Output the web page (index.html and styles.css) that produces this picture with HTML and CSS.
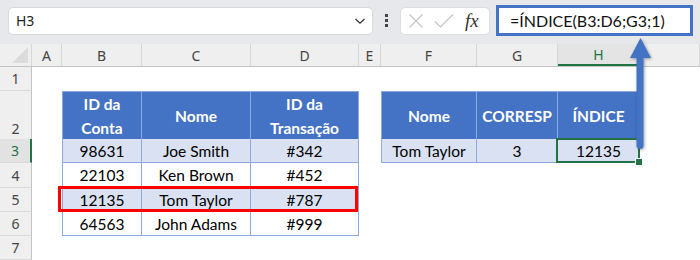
FILE: index.html
```html
<!DOCTYPE html>
<html lang="pt">
<head>
    <meta charset="UTF-8">
    <meta name="viewport" content="width=device-width, initial-scale=1.0">
    <title>ÍNDICE</title>
    <link rel="stylesheet" href="styles.css">
</head>
<body>
    <div class="toolbar">
        <div class="name-box">
            <span>H3</span>
            <svg class="chevron" width="12" height="8" viewBox="0 0 12 8"><path d="M1.5 2 L6 6.2 L10.5 2" fill="none" stroke="#333" stroke-width="1.3"/></svg>
        </div>
        <div class="grip"><i></i><i></i><i></i></div>
        <div class="fx-box">
            <svg width="16" height="16" viewBox="0 0 16 16"><path d="M1.5 1.5 L14.5 14.5 M14.5 1.5 L1.5 14.5" stroke="#c4c4c4" stroke-width="1.2"/></svg>
            <svg width="20" height="16" viewBox="0 0 20 16"><path d="M1 8.5 L6.5 14 L19 1.5" fill="none" stroke="#c4c4c4" stroke-width="1.2"/></svg>
            <span class="fx">fx</span>
        </div>
        <div class="formula">=ÍNDICE(B3:D6;G3;1)</div>
    </div>

    <div class="sheet">
        <div class="row heads">
            <div class="corner"></div>
            <div>A</div><div>B</div><div>C</div><div>D</div><div>E</div><div>F</div><div>G</div><div class="on">H</div><div></div>
        </div>

        <div class="row r1"><div class="rh">1</div></div>

        <div class="row r2">
            <div class="rh">2</div><div></div>
            <div class="th first">ID da<br>Conta</div>
            <div class="th">Nome</div>
            <div class="th">ID da<br>Transação</div>
            <div></div>
            <div class="th first">Nome</div>
            <div class="th">CORRESP</div>
            <div class="th">ÍNDICE</div>
        </div>

        <div class="row">
            <div class="rh on">3</div><div></div>
            <div class="td first band">98631</div>
            <div class="td band">Joe Smith</div>
            <div class="td band">#342</div>
            <div></div>
            <div class="td first band">Tom Taylor</div>
            <div class="td band">3</div>
            <div class="td band selected">12135</div>
        </div>

        <div class="row r4">
            <div class="rh">4</div><div></div>
            <div class="td first">22103</div>
            <div class="td">Ken Brown</div>
            <div class="td">#452</div>
        </div>

        <div class="row">
            <div class="rh">5</div><div></div>
            <!-- the matched row, boxed in red -->
            <div class="match">
                <div class="td first band">12135</div>
                <div class="td band">Tom Taylor</div>
                <div class="td band">#787</div>
            </div>
        </div>

        <div class="row">
            <div class="rh">6</div><div></div>
            <div class="td first">64563</div>
            <div class="td">John Adams</div>
            <div class="td">#999</div>
        </div>

        <div class="row"><div class="rh">7</div></div>

        <!-- arrow pointing from the result cell up to the formula -->
        <svg class="arrow" width="30" height="120" viewBox="0 0 30 120">
            <rect x="9.5" y="19" width="7" height="93" rx="3.5" fill="#4472c4"/>
            <polygon points="13.5,1 3,21 24,21" fill="#4472c4"/>
        </svg>
    </div>
</body>
</html>
```

FILE: styles.css
```css
* {
    margin: 0;
    padding: 0;
    box-sizing: border-box;
}
body {
    width: 700px;
    height: 260px;
    overflow: hidden;
    background: #fff;
    font-family: "Noto Sans", sans-serif;
}

/* formula bar */
.toolbar {
    height: 44px;
    background: #e7e8eb;
    display: flex;
    align-items: center;
    padding: 0 7px 3px 8px;
}
.name-box {
    width: 365px;
    height: 28px;
    background: #fff;
    border: 1px solid #d9d9d9;
    border-radius: 5px;
    display: flex;
    align-items: center;
    justify-content: space-between;
    padding: 0 6px 0 7px;
    font-size: 14px;
    color: #222;
}
.grip {
    width: 27px;
    display: flex;
    flex-direction: column;
    align-items: center;
    gap: 2px;
}
.grip i {
    width: 3px;
    height: 3px;
    background: #444;
}
.fx-box {
    width: 90px;
    height: 28px;
    background: #fff;
    border: 1px solid #dedede;
    border-radius: 5px;
    display: flex;
    align-items: center;
    gap: 10px;
    padding-left: 7px;
}
.fx {
    font-family: "Liberation Serif", serif;
    font-style: italic;
    font-size: 19px;
    color: #333;
    margin-left: 1px;
}
.formula {
    flex: 1;
    height: 31px;
    margin-left: 6px;
    border: 3px solid #4472c4;
    background: #fff;
    display: flex;
    align-items: center;
    padding-left: 11px;
    font-family: Lato, sans-serif;
    font-size: 16px;
    color: #111;
}

/* grid */
.sheet {
    position: relative;
    --cols: 32px 30px 80px 109px 108px 22px 96px 81px 82px 1fr;
}
.row {
    display: grid;
    grid-template-columns: var(--cols);
    height: 24px;
    font-family: Lato, sans-serif;
    font-size: 15.5px;
}
.r2 { height: 48px; }
.r4 { height: 25px; }

.heads {
    height: 23px;
    background: #efefef;
    border-bottom: 1px solid #c4c4c4;
    font-family: "Noto Sans", sans-serif;
    font-size: 14px;
    color: #444;
}
.heads div {
    display: flex;
    align-items: center;
    justify-content: center;
    border-right: 1px solid #d6d6d6;
}
.heads .on {
    color: #217346;
    background: #e4e4e4;
    border-bottom: 2px solid #217346;
}
.corner {
    position: relative;
}
.corner::after {
    content: "";
    position: absolute;
    right: 3px;
    bottom: 3px;
    width: 16px;
    height: 16px;
    background: #dcdcdc;
    clip-path: polygon(100% 0, 100% 100%, 0 100%);
}

.rh {
    background: #efefef;
    border-right: 1px solid #c4c4c4;
    border-bottom: 1px solid #dadada;
    display: flex;
    align-items: flex-end;
    justify-content: center;
    padding-bottom: 2px;
    font-family: "Noto Sans", sans-serif;
    font-size: 14px;
    color: #444;
}
.rh.on {
    background: #e2e2e2;
    color: #217346;
    border-right: 2px solid #217346;
}

/* tables */
.th, .td {
    display: flex;
    align-items: center;
    justify-content: center;
    text-align: center;
    border-right: 1px solid #8ea9db;
    border-bottom: 1px solid #8ea9db;
}
.th {
    background: #4472c4;
    color: #fff;
    font-weight: bold;
    line-height: 24px;
    border-top: 1px solid #8ea9db;
}
.td {
    color: #000;
}
.first {
    border-left: 1px solid #8ea9db;
}
.band {
    background: #d9e1f2;
}
.selected {
    position: relative;
}
.selected::after {
    content: "";
    position: absolute;
    inset: -1px -1px -1px -2px;
    border: 2px solid #217346;
}
.selected::before {
    content: "";
    position: absolute;
    right: -4px;
    bottom: -4px;
    width: 6px;
    height: 6px;
    background: #217346;
    border: 1px solid #fff;
    z-index: 1;
}

.match {
    grid-column: 3 / 6;
    display: grid;
    grid-template-columns: 80px 109px 108px;
    position: relative;
}
.match::after {
    content: "";
    position: absolute;
    inset: -2px 1px 0 -4px;
    border: 3px solid #f00;
}

.arrow {
    position: absolute;
    left: 627px;
    top: -7px;
    filter: drop-shadow(1px 1px 1.5px rgba(0, 0, 0, 0.35));
    z-index: 2;
}
```
